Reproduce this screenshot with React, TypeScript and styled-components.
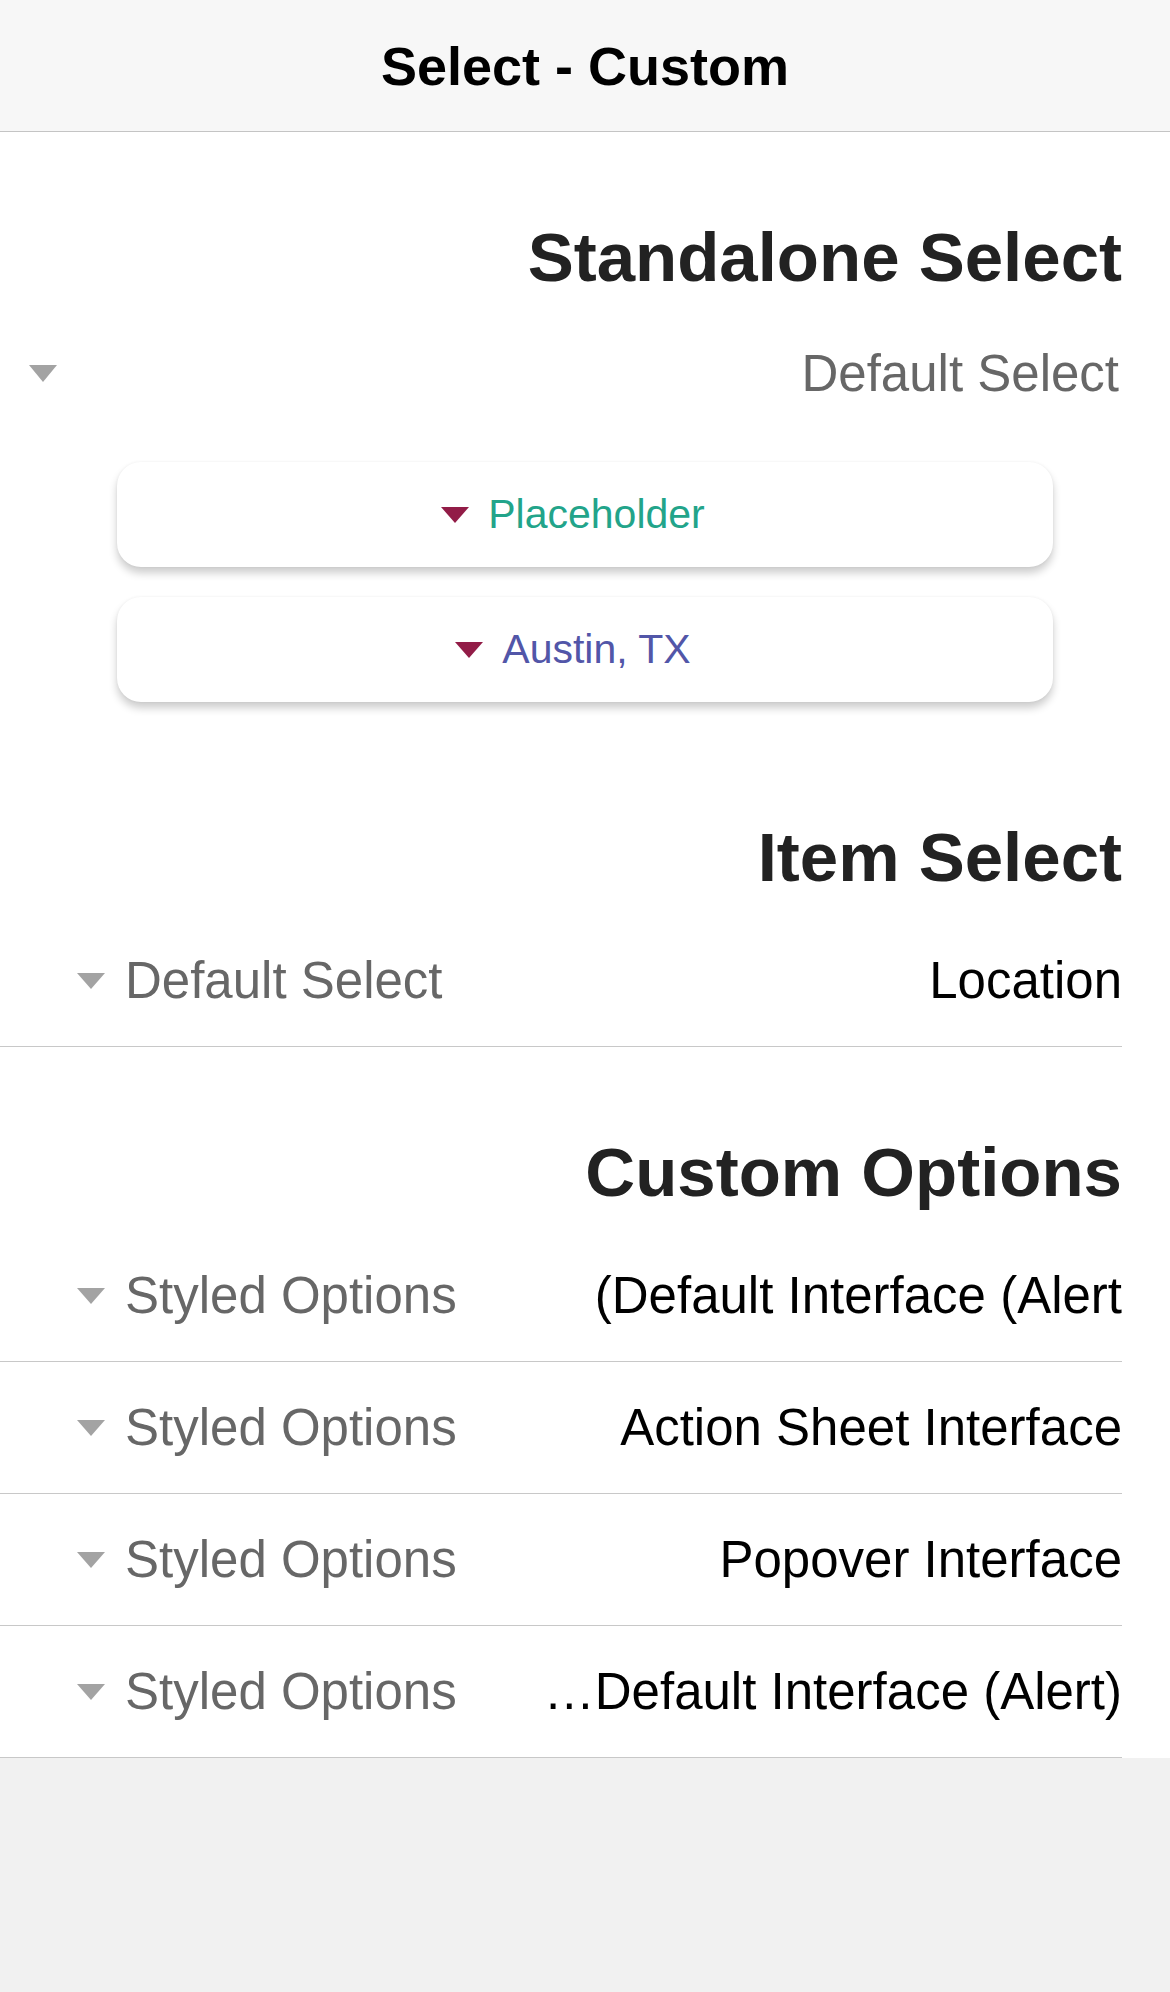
import React from "react";
import styled, { createGlobalStyle } from "styled-components";

const Global = createGlobalStyle`
  html, body {
    margin: 0;
    padding: 0;
    background: #f1f1f1;
    font-family: "Liberation Sans", Arial, sans-serif;
  }
`;

const Page = styled.div`
  width: 1170px;
  display: flex;
  flex-direction: column;
`;

const Toolbar = styled.header`
  height: 131px;
  background: #f7f7f7;
  border-bottom: 1px solid #c4c4c4;
  display: flex;
  align-items: center;
  justify-content: center;
`;

const Title = styled.h1`
  margin: 0;
  font-size: 54px;
  font-weight: 700;
  color: #000;
`;

const Content = styled.main`
  direction: rtl;
  background: #fff;
  display: flex;
  flex-direction: column;
`;

const Heading = styled.h2`
  margin: 84px 0 16px;
  padding: 0 48px;
  height: 83px;
  line-height: 83px;
  font-size: 69px;
  font-weight: 700;
  color: #222;
  text-align: right;
`;

const Arrow = styled.span<{ $color: string; $w: number; $h: number }>`
  display: inline-block;
  flex: none;
  width: 0;
  height: 0;
  border-left: ${(p) => p.$w / 2}px solid transparent;
  border-right: ${(p) => p.$w / 2}px solid transparent;
  border-top: ${(p) => p.$h}px solid ${(p) => p.$color};
`;

const StandaloneSelect = styled.div`
  height: 117px;
  display: flex;
  align-items: center;
  justify-content: space-between;
  padding: 0 51px 0 29px;
  font-size: 51px;
  color: #676767;
`;

const CardStack = styled.div`
  display: flex;
  flex-direction: column;
  align-items: center;
  gap: 30px;
  padding: 30px 0 30px;
`;

const Card = styled.div<{ $color: string }>`
  width: 936px;
  height: 105px;
  box-sizing: border-box;
  padding: 0 48px 0 24px;
  background: #fff;
  border-radius: 24px;
  box-shadow: 0 6px 9px rgba(0, 0, 0, 0.2), 0 0 3px rgba(0, 0, 0, 0.05);
  display: flex;
  align-items: center;
  justify-content: center;
  gap: 19px;
  font-size: 41px;
  color: ${(p) => p.$color};
`;

const Row = styled.div`
  height: 131px;
  margin-right: 48px;
  border-bottom: 1px solid #c8c8c8;
  display: flex;
  align-items: center;
  justify-content: space-between;
  padding-left: 77px;
  font-size: 51px;
`;

const Label = styled.span`
  color: #000;
  white-space: nowrap;
  direction: ltr;
  unicode-bidi: isolate;
`;

const Select = styled.span`
  display: flex;
  align-items: center;
  gap: 20px;
  color: #676767;
  white-space: nowrap;
`;

const customRows = [
  "(Default Interface (Alert",
  "Action Sheet Interface",
  "Popover Interface",
  "…Default Interface (Alert)",
];

export default function App() {
  return (
    <>
      <Global />
      <Page>
        <Toolbar>
          <Title>Select - Custom</Title>
        </Toolbar>
        <Content dir="rtl">
          <Heading>Standalone Select</Heading>
          <StandaloneSelect>
            <span>Default Select</span>
            <Arrow $color="#a3a3a3" $w={28} $h={17} />
          </StandaloneSelect>
          <CardStack>
            <Card $color="#22a48a">
              <span>Placeholder</span>
              <Arrow $color="#921c47" $w={28} $h={16} />
            </Card>
            <Card $color="#5256a8">
              <span>Austin, TX</span>
              <Arrow $color="#921c47" $w={28} $h={16} />
            </Card>
          </CardStack>

          <Heading>Item Select</Heading>
          <Row>
            <Label>Location</Label>
            <Select>
              <span>Default Select</span>
              <Arrow $color="#a3a3a3" $w={29} $h={16} />
            </Select>
          </Row>

          <Heading>Custom Options</Heading>
          {customRows.map((label, i) => (
            <Row key={i}>
              <Label>{label}</Label>
              <Select>
                <span>Styled Options</span>
                <Arrow $color="#a3a3a3" $w={29} $h={16} />
              </Select>
            </Row>
          ))}
        </Content>
      </Page>
    </>
  );
}
